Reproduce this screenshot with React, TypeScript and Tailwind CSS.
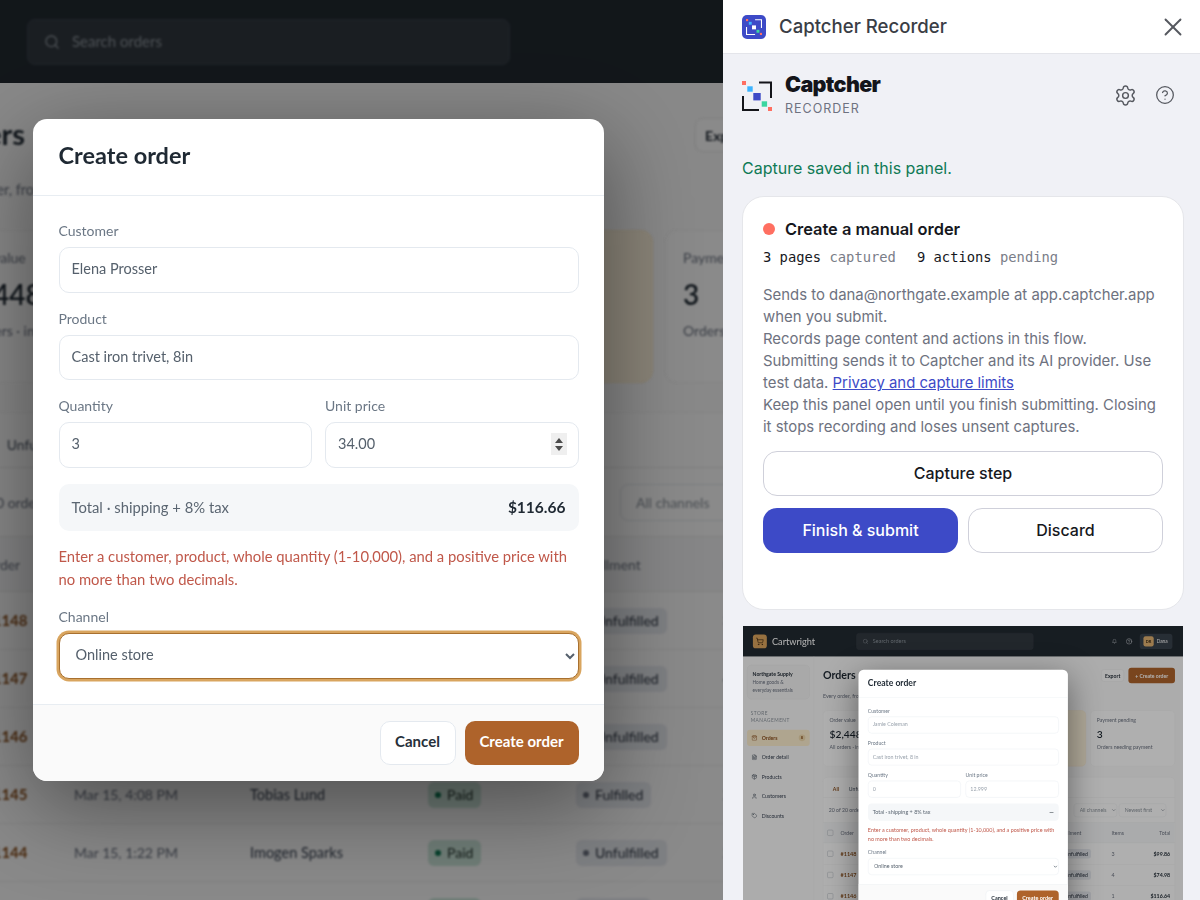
import { Bell, CircleHelp, Search, Settings, ShoppingCart, X, FileText, Package, User, Tag, ShoppingBag } from "lucide-react";

type Tone = "paid" | "unfulfilled" | "fulfilled";

const rows = [
  { id: "#1148", date: "Mar 16, 9:42 AM", name: "Nora Whitfield", pay: "Paid", ful: "Unfulfilled" as Tone, items: 3, total: "$99.86" },
  { id: "#1147", date: "Mar 16, 8:15 AM", name: "Callum Reyes", pay: "Paid", ful: "Unfulfilled" as Tone, items: 4, total: "$74.98" },
  { id: "#1146", date: "Mar 15, 6:31 PM", name: "Priya Raman", pay: "Paid", ful: "Unfulfilled" as Tone, items: 1, total: "$116.64" },
  { id: "#1145", date: "Mar 15, 4:08 PM", name: "Tobias Lund", pay: "Paid", ful: "Fulfilled" as Tone, items: 2, total: "$58.20" },
  { id: "#1144", date: "Mar 15, 1:22 PM", name: "Imogen Sparks", pay: "Paid", ful: "Unfulfilled" as Tone, items: 2, total: "$83.40" },
  { id: "#1143", date: "Mar 14, 5:02 PM", name: "Owen Marsh", pay: "Paid", ful: "Fulfilled" as Tone, items: 1, total: "$41.10" },
];

function Badge({ label, tone }: { label: string; tone: Tone }) {
  const box =
    tone === "paid" ? "bg-[#cce6da] text-[#1f2f29]" : tone === "unfulfilled" ? "bg-[#f8e9cf] text-[#2f2c25]" : "bg-[#e6e9ee] text-[#2b3340]";
  const dot = tone === "paid" ? "bg-[#0f7a55]" : tone === "unfulfilled" ? "bg-[#d98a1f]" : "bg-[#6b7280]";
  return (
    <span className={`inline-flex h-[26px] items-center gap-[6px] rounded-md pr-2 pl-[7px] text-[14px] ${box}`}>
      <span className={`h-[6px] w-[6px] rounded-full ${dot}`} />
      {label}
    </span>
  );
}

function Field({ label, children }: { label: string; children: React.ReactNode }) {
  return (
    <label className="flex flex-col gap-[6px]">
      <span className="h-5 text-[14px] leading-5 text-[#6b7785]">{label}</span>
      {children}
    </label>
  );
}

function OrderModal({ customer, product, qty, price, total, muted, focused }: { customer: string; product: string; qty: string; price: string; total: string; muted?: boolean; focused?: boolean }) {
  const input = `w-full rounded-[10px] border-[1.5px] border-[#e4e9ef] bg-white px-3 pb-[3px] text-[14.5px] outline-none ${muted ? "text-[#9aa3ad]" : "text-[#55606c]"}`;
  return (
    <div className="ml-[1px] w-[571px] overflow-hidden rounded-[14px] bg-white shadow-[0_24px_90px_rgba(0,0,0,0.45)]">
      <div className="flex h-[77px] items-center border-b-[1.5px] border-[#e8edf2] px-[25.5px] pb-[3px]">
        <h2 className="text-[23.5px] font-bold text-[#1f2933]">Create order</h2>
      </div>
      <div className="flex flex-col gap-4 px-[25.5px] pt-[25px] pb-[25px]">
        <Field label="Customer">
          <input className={`h-[46px] ${input}`} defaultValue={customer} />
        </Field>
        <Field label="Product">
          <input className={`h-[45px] ${input}`} defaultValue={product} />
        </Field>
        <div className="grid grid-cols-2 gap-[13px]">
          <Field label="Quantity">
            <input className={`h-[46px] ${input}`} defaultValue={qty} />
          </Field>
          <Field label="Unit price">
            <div className="relative">
              <input className={`h-[46px] ${input}`} defaultValue={price} />
              {focused && (
                <span className="absolute top-[11px] right-[12px] flex h-[22px] w-4 flex-col items-center justify-center gap-[3px] bg-[#efefef]">
                  <span className="h-0 w-0 border-x-[4px] border-b-[5px] border-x-transparent border-b-[#4b4b4b]" />
                  <span className="h-0 w-0 border-x-[4px] border-t-[5px] border-x-transparent border-t-[#4b4b4b]" />
                </span>
              )}
            </div>
          </Field>
        </div>
        <div className="flex h-[47px] items-center justify-between rounded-[10px] bg-[#f5f7f9] px-[13px] text-[14.8px] text-[#5b6672]">
          <span>Total · shipping + 8% tax</span>
          <span className="text-[15.5px] font-bold text-[#1f2933]">{total}</span>
        </div>
        <p className="-mt-[2px] text-[14.8px] leading-[23px] text-[#c0584a]">
          Enter a customer, product, whole quantity (1-10,000), and a positive price with no more than two decimals.
        </p>
        <Field label="Channel">
          <select
            defaultValue="Online store"
            className={`h-[46px] w-full rounded-[10px] bg-white px-3 pb-[3px] text-[14.5px] text-[#55606c] outline-none ${focused ? "border-[1.5px] border-[#a8702f] ring-[2.5px] ring-[#d9a55f]" : "border-[1.5px] border-[#e4e9ef]"}`}
          >
            <option>Online store</option>
            <option>Wholesale</option>
          </select>
        </Field>
      </div>
      <div className="flex justify-end gap-[9px] border-t-[1.5px] border-[#e8edf2] bg-[#fafafa] px-[25.5px] py-4">
        <button className="h-11 w-[76px] rounded-[10px] border-[1.5px] border-[#e4e9ef] bg-white pb-[3px] text-[15px] font-bold text-[#27303a]">Cancel</button>
        <button className="h-11 w-[114px] rounded-[10px] bg-[#ae632b] pb-[3px] text-[15px] font-bold text-white">Create order</button>
      </div>
    </div>
  );
}

function OrdersPage({ blurred, thumb }: { blurred?: boolean; thumb?: boolean }) {
  const soft = blurred ? "blur-[1px]" : "";
  const nav = [
    { label: "Order detail", icon: FileText },
    { label: "Products", icon: Package },
    { label: "Customers", icon: User },
    { label: "Discounts", icon: Tag },
  ];
  return (
    <div className="relative h-[900px] w-[1200px] overflow-hidden bg-[#f7f7f7] font-['Lato',sans-serif]">
      <div className="h-[83px] overflow-hidden bg-[#222a31]">
        <header className={`flex h-full items-center pr-[29px] pl-[27px] ${soft}`}>
          <div className="flex w-[282px] items-center gap-[14px]">
            <span className="flex h-[38px] w-[38px] items-center justify-center rounded-lg bg-[#d9a25c] text-[#3b2a14]">
              <ShoppingCart size={22} />
            </span>
            <span className="text-[25px] text-white">Cartwright</span>
          </div>
          <div className="flex h-[46px] w-[483px] items-center gap-[12px] rounded-lg border border-[#39414a] bg-[#31383f] px-4 text-[15px] text-[#8b939b]">
            <Search size={16} />
            Search orders
          </div>
          <div className="ml-auto flex items-center gap-[24px] text-[#c9ced4]">
            <Bell size={14} />
            <CircleHelp size={18} />
          </div>
          <div className="ml-[20px] flex h-[42px] w-[89px] items-center gap-[8px] rounded-lg bg-[#39424c] px-[10px] text-[13px] text-white">
            <span className="flex h-7 w-7 items-center justify-center rounded-md bg-[#e0b070] text-[11px] font-bold text-[#3b2a14]">DR</span>
            Dana
          </div>
        </header>
      </div>
      <div className={`flex ${soft}`}>
        <aside className="h-[817px] w-[194px] shrink-0 border-r border-[#e8e8e8] px-[11px] pt-[23px]">
          <div className="h-[94px] rounded-xl border border-[#e5e5e5] bg-[#f3f3f3] px-[14px] py-3">
            <p className="text-[14px] font-bold text-[#1f2933]">Northgate Supply</p>
            <p className="mt-1 text-[13px] leading-5 text-[#6b7280]">
              Home goods &<br />
              everyday essentials
            </p>
          </div>
          <p className="mt-[30px] px-[10px] text-[13px] leading-[19px] tracking-[0.1em] text-[#8b939b]">STORE MANAGEMENT</p>
          <nav className="mt-[15px] flex flex-col gap-[9px]">
            <div className="flex h-11 items-center gap-3 rounded-lg bg-[#fbeccd] px-3 text-[14px] font-bold text-[#8a4f1d]">
              <ShoppingBag size={16} />
              Orders
              <span className="ml-auto flex h-[18px] w-[18px] items-center justify-center rounded-full bg-[#eed9ae] text-[11px]">8</span>
            </div>
            {nav.map((item) => (
              <div key={item.label} className="flex h-11 items-center gap-3 px-3 text-[14px] text-[#374151]">
                <item.icon size={16} />
                {item.label}
              </div>
            ))}
          </nav>
        </aside>
        <main className="w-[984px] shrink-0 pt-9 pl-6">
          <div className="flex items-start justify-between">
            <div>
              <h1 className="text-[29px] leading-[30px] font-bold text-[#1f2933]">Orders</h1>
              <p className="mt-[31px] text-[14.5px] leading-5 text-[#6b7280]">Every order, from checkout through fulfillment, in one place.</p>
            </div>
            <div className="-mt-[5px] flex items-center gap-3">
              <button className="h-[34px] w-[62px] rounded-lg border border-[#e4e4e4] bg-[#fbfbfb] text-[14px] font-bold text-[#27303a]">Export</button>
              <button className="h-[42px] w-[127px] rounded-lg bg-[#ae632b] text-[14px] font-bold text-white">+ Create order</button>
            </div>
          </div>
          <div className="mt-[30px] grid grid-cols-4 gap-3">
            {[
              { label: "Order value", value: "$2,448.", note: "All orders · incl. shipping" },
              { label: "Orders today", value: "6", note: "Since midnight" },
              { label: "To fulfill", value: "8", note: "Orders waiting to ship", warm: true },
              { label: "Payment pending", value: "3", note: "Orders needing payment" },
            ].map((c) => (
              <div key={c.label} className={`h-[153px] rounded-xl border px-[17px] pt-4 ${c.warm ? "border-[#f6e7c8] bg-[#fdf2dc]" : "border-[#ececec] bg-[#fbfbfb]"}`}>
                <p className="text-[14px] text-[#6b7280]">{c.label}</p>
                <p className="mt-[8px] text-[28px] leading-9 font-semibold text-[#1f2933]">{c.value}</p>
                <p className="mt-[8px] text-[14px] leading-[22px] text-[#6b7280]">{c.note}</p>
              </div>
            ))}
          </div>
          <div className="mt-[29px] rounded-t-xl border border-[#ececec] bg-[#fbfbfb]">
            <div className="flex h-[55px] items-center gap-[27px] border-b border-[#e8e8e8] pt-2 pl-[26px] text-[14px] text-[#4b5563]">
              <span className="font-bold text-[#8a4f1d]">All</span>
              <span>Unfulfilled</span>
              <span>Unpaid</span>
            </div>
            <div className="flex h-[69px] items-center border-b border-[#e8e8e8] pr-[23px] pl-[15px] text-[14px] text-[#6b7280]">
              <span>20 of 20 orders</span>
              <select defaultValue="All channels" className="ml-auto h-[37px] w-[118px] rounded-lg border border-[#e4e6ea] pl-[11px] text-[#8b939b] outline-none">
                <option>All channels</option>
              </select>
              <select defaultValue="Newest first" className="ml-[5px] h-[37px] w-[129px] rounded-lg border border-[#e4e6ea] pl-[11px] text-[#8b939b] outline-none">
                <option>Newest first</option>
              </select>
            </div>
            <div className="flex h-[55px] items-center border-b border-[#e8e8e8] bg-[#f4f5f6] text-[14px] text-[#6b7280]">
              <span className="w-[47px] pl-[11px]"><span className="block h-4 w-4 rounded-[3px] border border-[#9aa3ad]" /></span>
              <span className="w-[90px]">Order</span>
              <span className="w-[176px]">Date</span>
              <span className="w-[178px]">Customer</span>
              <span className="w-[148px]">Payment</span>
              <span className="w-[147px]">Fulfillment</span>
              <span className="w-[100px]">Items</span>
              <span className="flex-1 pr-3 text-right">Total</span>
            </div>
            {rows.map((r) => (
              <div key={r.id} className="flex h-[58px] items-center border-b border-[#ececec] text-[14.5px]">
                <span className="w-[47px] pl-[11px]"><span className="block h-4 w-4 rounded-[3px] border border-[#9aa3ad]" /></span>
                <span className="w-[90px] text-[15px] font-bold text-[#8a4f1d]">{r.id}</span>
                <span className="w-[176px] text-[14px] text-[#6b7280]">{r.date}</span>
                <span className="w-[178px] text-[#374151]">{r.name}</span>
                <span className="w-[148px]"><Badge label={r.pay} tone="paid" /></span>
                <span className="w-[147px]"><Badge label={r.ful} tone={r.ful} /></span>
                <span className="w-[100px] text-[#6b7280]">{r.items}</span>
                <span className="flex-1 pr-3 text-right font-bold text-[#1f2933]">{r.total}</span>
              </div>
            ))}
          </div>
        </main>
      </div>
      <div className={`absolute inset-0 flex items-center justify-center ${thumb ? "bg-black/30" : "bg-black/45"}`}>
        {thumb ? (
          <OrderModal customer="Jamie Coleman" product="Cast iron trivet, 8 in" qty="0" price="12.999" total="—" muted />
        ) : (
          <OrderModal customer="Elena Prosser" product="Cast iron trivet, 8in" qty="3" price="34.00" total="$116.66" focused />
        )}
      </div>
    </div>
  );
}

function CaptcherMark({ size, onBlue }: { size: number; onBlue?: boolean }) {
  const line = onBlue ? "#ffffff" : "#14151a";
  return (
    <svg width={size} height={size} viewBox="0 0 30 30" fill="none">
      <path d="M17 1.5H29V17" stroke={line} strokeWidth="2" />
      <path d="M1 15V29H17" stroke={line} strokeWidth="2" />
      <rect x="0" y="0" width="4" height="4" fill="#ff6f61" />
      <rect x="5.3" y="5.3" width="5.4" height="5.4" fill="#3db4ff" />
      <rect x="11.3" y="12" width="7.4" height="7.4" fill={onBlue ? "#ffffff" : "#3d4ac7"} />
      <rect x="19.7" y="20.3" width="5.4" height="5.4" fill="#3bd6a0" />
      <rect x="26" y="26" width="4" height="4" fill="#ff6f61" />
    </svg>
  );
}

function RecorderPanel() {
  return (
    <aside className="flex h-[900px] w-[477px] shrink-0 flex-col overflow-hidden bg-[#f0f1f6] font-['Inter',sans-serif]">
      <div className="flex h-[54px] shrink-0 items-center border-b-[1.5px] border-[#e4e5ea] bg-white pr-[12px] pl-[19px]">
        <span className="flex h-6 w-6 items-center justify-center rounded-[5px] bg-[#3d4ac7]">
          <CaptcherMark size={16} onBlue />
        </span>
        <span className="ml-[13px] text-[18.6px] font-medium text-[#3a3d45]">Captcher Recorder</span>
        <X size={30} strokeWidth={1.5} className="ml-auto text-[#55585f]" />
      </div>
      <div className="pt-[26px] pr-[16px] pl-[19px]">
        <div className="flex items-start">
          <span className="mt-[1px]"><CaptcherMark size={30} /></span>
          <div className="-mt-[8px] ml-[13px]">
            <p className="text-[21.5px] leading-[24px] font-black tracking-[-0.03em] text-[#14151a]">Captcher</p>
            <p className="mt-[5px] text-[12.5px] leading-[16px] tracking-[0.08em] text-[#6e7280]">RECORDER</p>
          </div>
          <Settings size={23} strokeWidth={1.5} className="mt-[4px] ml-auto text-[#55585f]" />
          <CircleHelp size={20} strokeWidth={1.5} className="mt-[5px] mr-[9px] ml-[18px] text-[#55585f]" />
        </div>
        <p className="mt-[39px] text-[16px] leading-[24px] text-[#0f7a55]">Capture saved in this panel.</p>
        <div className="mt-[16px] h-[414px] rounded-[22px] border border-[#e5e6ea] bg-white px-[20px] pt-[21px]">
          <div className="flex items-center gap-[10px]">
            <span className="h-3 w-3 rounded-full bg-[#ff6f61]" />
            <span className="text-[16.4px] leading-[22px] font-semibold text-[#16181d]">Create a manual order</span>
          </div>
          <p className="mt-[7px] flex gap-[21px] font-['DejaVu_Sans_Mono',monospace] text-[13.8px] leading-[20px] text-[#7a7d88]">
            <span><span className="text-[#16181d]">3 pages</span> captured</span>
            <span><span className="text-[#16181d]">9 actions</span> pending</span>
          </p>
          <div className="mt-[17px] text-[14.9px] leading-[22px] text-[#6e7280]">
            <p>Sends to dana@northgate.example at app.captcher.app when you submit.</p>
            <p>Records page content and actions in this flow.</p>
            <p>
              Submitting sends it to Captcher and its AI provider. Use test data.{" "}
              <a className="text-[#3d4ac7] underline">Privacy and capture limits</a>
            </p>
            <p>Keep this panel open until you finish submitting. Closing it stops recording and loses unsent captures.</p>
          </div>
          <button className="mt-[13px] h-[45px] w-full rounded-[14px] border-[1.5px] border-[#cfd0da] bg-white pb-[2px] text-[16px] font-[450] text-[#16181d]">Capture step</button>
          <div className="mt-3 flex gap-[10px]">
            <button className="h-[45px] w-[195px] rounded-[14px] bg-[#3d4ac7] pb-[2px] text-[16px] font-medium text-white">Finish & submit</button>
            <button className="h-[45px] w-[195px] rounded-[14px] border-[1.5px] border-[#cfd0da] bg-white pb-[2px] text-[16px] font-[450] text-[#16181d]">Discard</button>
          </div>
        </div>
        <div className="mt-[16px] ml-[1px] h-[340px] w-[440px] overflow-hidden">
          <div className="origin-top-left scale-[0.3667] blur-[0.6px]">
            <OrdersPage thumb />
          </div>
        </div>
      </div>
    </aside>
  );
}

export default function App() {
  return (
    <div className="flex h-[900px] w-[1200px] overflow-hidden">
      <div className="h-[900px] w-[723px] shrink-0 overflow-hidden">
        <div className="-ml-[282px]">
          <OrdersPage blurred />
        </div>
      </div>
      <RecorderPanel />
    </div>
  );
}
